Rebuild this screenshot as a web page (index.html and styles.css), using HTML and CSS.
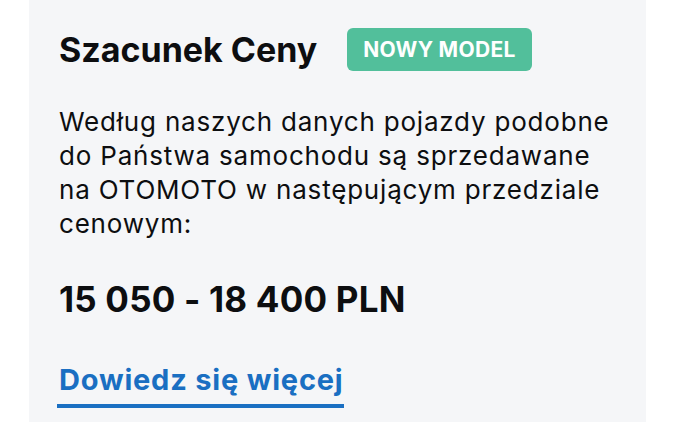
FILE: index.html
```html
<!DOCTYPE html>
<html lang="pl">
<head>
<meta charset="utf-8">
<link rel="stylesheet" href="styles.css">
</head>
<body>
<div class="card">
  <div class="header">
    <h2 class="title">Szacunek Ceny</h2>
    <span class="badge">NOWY MODEL</span>
  </div>
  <p class="desc">Według naszych danych pojazdy podobne<br>do Państwa samochodu są sprzedawane<br>na OTOMOTO w następującym przedziale<br>cenowym:</p>
  <p class="price">15 050 - 18 400 PLN</p>
  <a class="more" href="#">Dowiedz się więcej</a>
</div>
</body>
</html>
```
FILE: styles.css
```css
html, body {
  margin: 0;
  padding: 0;
  background: #ffffff;
  height: 100%;
  overflow: hidden;
}
body {
  font-family: Inter, "Noto Sans", sans-serif;
  color: #0d0e10;
}
.card {
  margin-left: 29px;
  width: 617px;
  height: 422px;
  box-sizing: border-box;
  background: #f5f6f8;
  padding: 28px 30px 0 30px;
}
.header {
  display: flex;
  align-items: center;
  gap: 30px;
}
.title {
  margin: 0;
  font-size: 34px;
  font-weight: 700;
  line-height: 43px;
  white-space: nowrap;
}
.badge {
  display: inline-block;
  height: 43px;
  line-height: 43px;
  padding: 0 16px;
  border-radius: 6px;
  background: #52bf9b;
  color: #ffffff;
  font-size: 21px;
  font-weight: 700;
  letter-spacing: 0.3px;
}
.desc {
  margin: 34px 0 0 0;
  font-size: 26px;
  line-height: 34px;
  font-weight: 400;
  letter-spacing: 0.8px;
  white-space: nowrap;
}
.price {
  margin: 38px 0 0 0;
  font-size: 35px;
  line-height: 40px;
  font-weight: 700;
  letter-spacing: 0.2px;
}
.more {
  display: inline-block;
  margin-top: 45px;
  margin-left: -2px;
  padding: 0 0 8px 2px;
  color: #1a6fc2;
  font-size: 29px;
  font-weight: 700;
  line-height: 32px;
  text-decoration: none;
  border-bottom: 4px solid #1a6fc2;
  letter-spacing: 0.8px;
}
```
